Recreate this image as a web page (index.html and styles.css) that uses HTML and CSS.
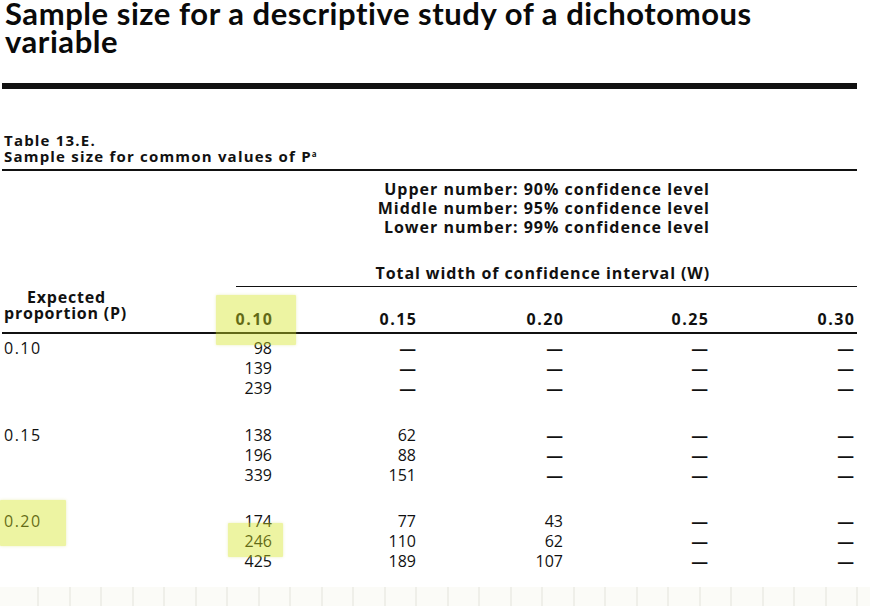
FILE: index.html
```html
<!DOCTYPE html>
<html>
<head>
<meta charset="utf-8">
<link rel="stylesheet" href="styles.css">
</head>
<body>
<div class="page">
  <h1 class="title">Sample size for a descriptive study of a dichotomous<br>variable</h1>
  <div class="rule-thick"></div>

  <div class="caption">
    <div>Table 13.E.</div>
    <div>Sample size for common values of P<sup>a</sup></div>
  </div>
  <div class="rule"></div>

  <div class="legend">
    <div>Upper number: 90% confidence level</div>
    <div>Middle number: 95% confidence level</div>
    <div>Lower number: 99% confidence level</div>
  </div>

  <div class="span-head">Total width of confidence interval (W)</div>

  <div class="head-row">
    <div class="head-label"><span class="exp">Expected</span><span>proportion (P)</span></div>
    <div class="head-num"><span class="hl hl-head">0.10</span></div>
    <div class="head-num">0.15</div>
    <div class="head-num">0.20</div>
    <div class="head-num">0.25</div>
    <div class="head-num">0.30</div>
  </div>

  <div class="data">
    <div class="group">
      <div class="label">0.10</div>
      <div class="col"><span>98</span><span>139</span><span>239</span></div>
      <div class="col"><span class="dash">—</span><span class="dash">—</span><span class="dash">—</span></div>
      <div class="col"><span class="dash">—</span><span class="dash">—</span><span class="dash">—</span></div>
      <div class="col"><span class="dash">—</span><span class="dash">—</span><span class="dash">—</span></div>
      <div class="col"><span class="dash">—</span><span class="dash">—</span><span class="dash">—</span></div>
    </div>
    <div class="group">
      <div class="label">0.15</div>
      <div class="col"><span>138</span><span>196</span><span>339</span></div>
      <div class="col"><span>62</span><span>88</span><span>151</span></div>
      <div class="col"><span class="dash">—</span><span class="dash">—</span><span class="dash">—</span></div>
      <div class="col"><span class="dash">—</span><span class="dash">—</span><span class="dash">—</span></div>
      <div class="col"><span class="dash">—</span><span class="dash">—</span><span class="dash">—</span></div>
    </div>
    <div class="group">
      <div class="label"><span class="hl hl-label">0.20</span></div>
      <div class="col"><span>174</span><span class="hl hl-cell">246</span><span>425</span></div>
      <div class="col"><span>77</span><span>110</span><span>189</span></div>
      <div class="col"><span>43</span><span>62</span><span>107</span></div>
      <div class="col"><span class="dash">—</span><span class="dash">—</span><span class="dash">—</span></div>
      <div class="col"><span class="dash">—</span><span class="dash">—</span><span class="dash">—</span></div>
    </div>
  </div>

  <div class="strip"></div>
</div>
</body>
</html>
```
FILE: styles.css
```css
html, body {
  margin: 0;
  padding: 0;
  background: #ffffff;
}

.page {
  width: 870px;
  height: 606px;
  overflow: hidden;
  font-family: "Open Sans", "DejaVu Sans", sans-serif;
  color: #111;
  display: flex;
  flex-direction: column;
}

.title {
  margin: 0;
  padding: 0 0 0 5px;
  font-family: Lato, "Open Sans", sans-serif;
  font-weight: 700;
  font-size: 31px;
  line-height: 27.5px;
  letter-spacing: 0.55px;
  color: #0a0a0a;
}

.rule-thick {
  margin: 28px 13px 0 2px;
  height: 6px;
  background: #111;
}

.caption {
  margin-top: 43px;
  padding-left: 4px;
  font-weight: 700;
  font-size: 15px;
  line-height: 16px;
  letter-spacing: 1.2px;
}

.caption sup {
  font-size: 8px;
  line-height: 0;
  vertical-align: 5px;
  letter-spacing: 0;
}

.rule {
  margin: 5px 13px 0 2px;
  height: 2px;
  background: #111;
}

.legend {
  margin-top: 9px;
  width: 710px;
  text-align: right;
  font-weight: 700;
  font-size: 16px;
  line-height: 19px;
  letter-spacing: 1px;
}

.span-head {
  margin: 27px 13px 0 236px;
  padding-right: 147px;
  text-align: right;
  font-weight: 700;
  font-size: 16px;
  line-height: 19px;
  letter-spacing: 0.9px;
  padding-bottom: 3px;
  border-bottom: 1.5px solid #111;
}

.head-row,
.group {
  display: grid;
  grid-template-columns: 140px 128px 144px 147px 145px 146px;
  padding-left: 4px;
}

.head-row {
  align-items: end;
  padding-bottom: 5px;
  margin-right: 13px;
  margin-left: 2px;
  padding-left: 2px;
  border-bottom: 2px solid #111;
  font-weight: 700;
  font-size: 16px;
  line-height: 16px;
  padding-top: 2px;
}

.head-label {
  display: flex;
  flex-direction: column;
  align-items: flex-start;
  margin-bottom: 6px;
  letter-spacing: 0.8px;
}

.head-label .exp {
  padding-left: 23px;
}

.head-num {
  text-align: right;
  letter-spacing: 1.5px;
  margin-right: -1.5px;
}

.data {
  padding-top: 4px;
  font-size: 16px;
  line-height: 20px;
  display: flex;
  flex-direction: column;
  gap: 26.5px;
}

.label {
  letter-spacing: 1.5px;
}

.col {
  display: flex;
  flex-direction: column;
  align-items: flex-end;
}

.dash {
  font-weight: 700;
  transform: scaleX(1.05);
  transform-origin: right center;
}

.hl {
  position: relative;
}

.hl::after {
  content: "";
  position: absolute;
  background: rgba(212, 228, 33, 0.42);
  box-shadow: 0 0 3px rgba(200, 210, 60, 0.35);
  border-radius: 1px;
}

.hl-head::after {
  left: -19px;
  right: -22px;
  top: -13px;
  bottom: -15px;
}

.hl-label::after {
  left: -4px;
  right: -24px;
  top: -10px;
  bottom: -14px;
}

.hl-cell::after {
  left: -17px;
  right: -11px;
  top: -8px;
  bottom: -6px;
}

.strip {
  margin-top: auto;
  height: 19px;
  background-color: #fbfbf7;
  background-image: repeating-linear-gradient(to right,
    transparent 0, transparent 30.5px,
    #e3e3db 30.5px, #e3e3db 31.5px);
  background-position: 7.5px 0;
}
```
